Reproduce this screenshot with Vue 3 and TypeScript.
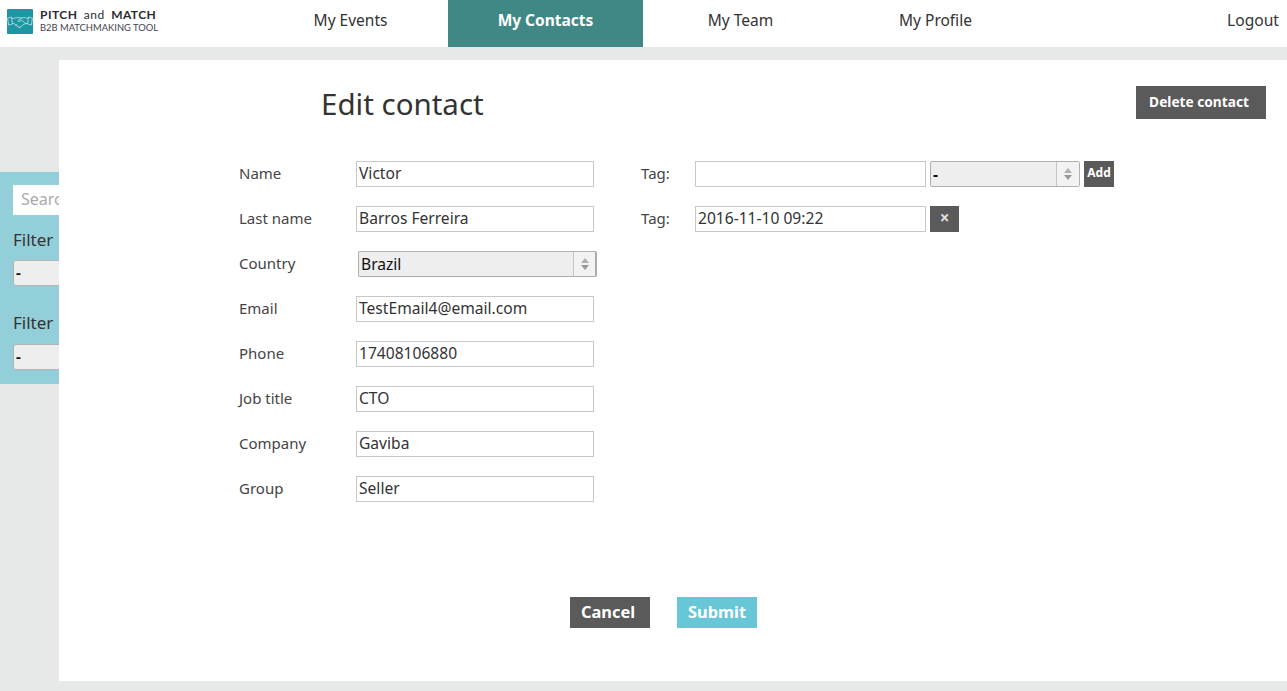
<script setup lang="ts">
const navItems = [
  { label: 'My Events', active: false },
  { label: 'My Contacts', active: true },
  { label: 'My Team', active: false },
  { label: 'My Profile', active: false },
]
const fields = [
  { label: 'Name', value: 'Victor' },
  { label: 'Last name', value: 'Barros Ferreira' },
  { label: 'Country', value: 'Brazil', select: true },
  { label: 'Email', value: 'TestEmail4@email.com' },
  { label: 'Phone', value: '17408106880' },
  { label: 'Job title', value: 'CTO' },
  { label: 'Company', value: 'Gaviba' },
  { label: 'Group', value: 'Seller' },
]
</script>

<template>
  <div class="page">
    <header class="header">
      <div class="logo">
        <svg class="logo-icon" viewBox="0 0 26 25" width="26" height="25">
          <rect width="26" height="25" rx="1" fill="#1f95a3" />
          <g fill="none" stroke="#bfe4e8" stroke-width="0.8" stroke-linejoin="round" stroke-linecap="round">
            <path d="M1 9l3.5-1 1 7L2 16z" />
            <path d="M25 9l-3.5-1-1 7 3.5 1z" />
            <path d="M4.8 9.5c2 .2 4-.9 6.2-1 1.5 0 2.5.6 3.5.6l2.5-.6c1.500.4 3 .8 4.500.6" />
            <path d="M5.400 14.500l2 .3 3.400 2.800c1 .8 2 .9 2.700.3l3.500-2.700 3.400-.9" />
            <path d="M14.500 9.100l-3.300 2.300c-.7.600.2 1.500 1 1.100l2.500-1.300 4 3.600" />
            <path d="M9.500 15.500l-.9.900M11.500 17l-.9.900M13.500 18l-.7.800" />
          </g>
        </svg>
        <div class="logo-text">
          <div class="logo-top"><b>PITCH</b> and <b>MATCH</b></div>
          <div class="logo-sub">B2B MATCHMAKING TOOL</div>
        </div>
      </div>
      <nav class="nav">
        <a v-for="item in navItems" :key="item.label" class="nav-item" :class="{ active: item.active }">{{ item.label }}</a>
      </nav>
      <a class="logout">Logout</a>
    </header>

    <div class="stage">
      <aside class="sidebar">
        <div class="search">Search</div>
        <div class="filter-label">Filter</div>
        <div class="filter-select">-</div>
        <div class="filter-label second">Filter</div>
        <div class="filter-select">-</div>
      </aside>

      <main class="card">
        <div class="title-row">
          <h1 class="title">Edit contact</h1>
          <button class="btn delete">Delete contact</button>
        </div>

        <div class="form">
          <div class="col-left">
            <div v-for="f in fields" :key="f.label" class="row">
              <label class="label">{{ f.label }}</label>
              <div v-if="f.select" class="select country">
                <span class="select-value">{{ f.value }}</span>
                <span class="spin"><i class="up"></i><i class="down"></i></span>
              </div>
              <div v-else class="input">{{ f.value }}</div>
            </div>
          </div>
          <div class="col-right">
            <div class="row">
              <label class="tag-label">Tag:</label>
              <div class="input tag-input"></div>
              <div class="select tag-select">
                <span class="select-value">-</span>
                <span class="spin"><i class="up"></i><i class="down"></i></span>
              </div>
              <button class="btn add">Add</button>
            </div>
            <div class="row">
              <label class="tag-label">Tag:</label>
              <div class="input tag-input">2016-11-10 09:22</div>
              <button class="btn remove">×</button>
            </div>
          </div>
        </div>

        <div class="actions">
          <button class="btn action cancel">Cancel</button>
          <button class="btn action submit">Submit</button>
        </div>
      </main>
    </div>
  </div>
</template>

<style>
html, body { margin: 0; background: #e7e9e8; overflow: hidden; }
</style>

<style scoped>
.page {
  height: 691px;
  font-family: "Noto Sans", "Open Sans", sans-serif;
  color: #333;
  background: #e7e9e8;
}
.header {
  height: 47px;
  background: #fff;
  display: flex;
  position: relative;
}
.logo {
  width: 253px;
  padding: 9px 0 0 7px;
  box-sizing: border-box;
  display: flex;
  gap: 7px;
}
.logo-icon { display: block; }
.logo-text { font-family: Lato, "Noto Sans", sans-serif; color: #2b2b33; margin-top: -1px; }
.logo-top { font-size: 12px; letter-spacing: 0.45px; word-spacing: 3px; line-height: 14px; }
.logo-sub { font-size: 9.4px; line-height: 11px; color: #44444c; }
.nav { display: flex; }
.nav-item {
  width: 195px;
  height: 47px;
  line-height: 40px;
  text-align: center;
  font-size: 15.5px;
  color: #333;
}
.nav-item.active { background: #3f8886; color: #fff; font-weight: 700; }
.logout {
  position: absolute;
  right: 8px;
  top: 0;
  line-height: 40px;
  font-size: 15.6px;
}
.stage {
  position: relative;
  padding: 13px 0 0 59px;
}
.sidebar {
  position: absolute;
  left: 0;
  top: 125px;
  width: 100px;
  height: 212px;
  background: #93cfd8;
  padding: 13px;
  box-sizing: border-box;
  overflow: hidden;
}
.search {
  width: 200px;
  height: 30px;
  background: #fff;
  color: #aaa;
  font-size: 16px;
  line-height: 29px;
  padding-left: 8px;
}
.filter-label { font-size: 17px; line-height: 22px; margin-top: 14px; }
.filter-label.second { margin-top: 26px; padding-bottom: 1px; }
.filter-select {
  width: 200px;
  height: 26px;
  margin-top: 9px;
  background: #eee;
  border: 1px solid #b4b4b4;
  border-radius: 3px;
  box-sizing: border-box;
  line-height: 23px;
  font-size: 15px;
  font-weight: 700;
  padding-left: 2px;
  color: #111;
}
.card {
  position: relative;
  background: #fff;
  height: 621px;
  box-sizing: border-box;
}
.title-row { height: 100px; position: relative; }
.title {
  margin: 0;
  padding: 25px 0 0 262px;
  font-size: 29.5px;
  font-weight: 400;
  line-height: 38px;
  color: #333;
}
.btn {
  border: 0;
  font-family: inherit;
  font-weight: 700;
  color: #fff;
  background: #5a5a5a;
  padding: 0 0 2px;
  text-align: center;
  display: block;
}
.delete {
  position: absolute;
  right: 21px;
  top: 26px;
  width: 130px;
  height: 33px;
  padding-right: 4px;
  font-size: 13.7px;
}
.form { display: flex; padding-left: 180px; }
.col-left { width: 402px; }
.col-right { flex: 1; }
.row {
  display: flex;
  align-items: center;
  height: 27px;
  margin-bottom: 18px;
}
.label { width: 117px; font-size: 15px; color: #444; padding-bottom: 2px; }
.tag-label { width: 54px; font-size: 15px; color: #444; padding-bottom: 2px; }
.input {
  box-sizing: border-box;
  width: 238px;
  height: 26px;
  border: 1px solid #c8c8c8;
  line-height: 23px;
  padding-left: 2px;
  font-size: 15.6px;
  color: #333;
  background: #fff;
}
.tag-input { width: 231px; }
.select {
  box-sizing: border-box;
  height: 26px;
  border: 1px solid #b0b0b0;
  border-radius: 2px;
  background: #eee;
  display: flex;
  align-items: center;
  justify-content: space-between;
  font-size: 15.6px;
  color: #111;
}
.select-value { padding: 0 0 0 2px; }
.country { width: 239px; margin-left: 2px; border-right: 2px solid #aaa; border-bottom-color: #aaa; }
.tag-select { width: 150px; margin-left: 4px; }
.tag-select .select-value { font-weight: 700; }
.tag-select .spin { width: 22px; }
.spin {
  width: 21px;
  height: 100%;
  border-left: 1px solid #c4c4c4;
  background: #f2f2f2;
  display: flex;
  flex-direction: column;
  align-items: center;
  justify-content: center;
  gap: 2px;
}
.spin i { display: block; width: 0; height: 0; border-left: 4px solid transparent; border-right: 4px solid transparent; }
.spin .up { border-bottom: 5px solid #b0b0b0; }
.spin .down { border-top: 5px solid #999; }
.add { width: 30px; height: 26px; margin-left: 4px; font-size: 12px; }
.remove { width: 29px; height: 26px; margin-left: 4px; font-size: 17px; color: #ddd; }
.actions {
  position: absolute;
  left: 511px;
  top: 537px;
  display: flex;
  gap: 27px;
}
.action { width: 80px; height: 31px; font-size: 16.4px; }
.cancel { padding-right: 4px; }
.submit { background: #68c7d6; }
</style>
